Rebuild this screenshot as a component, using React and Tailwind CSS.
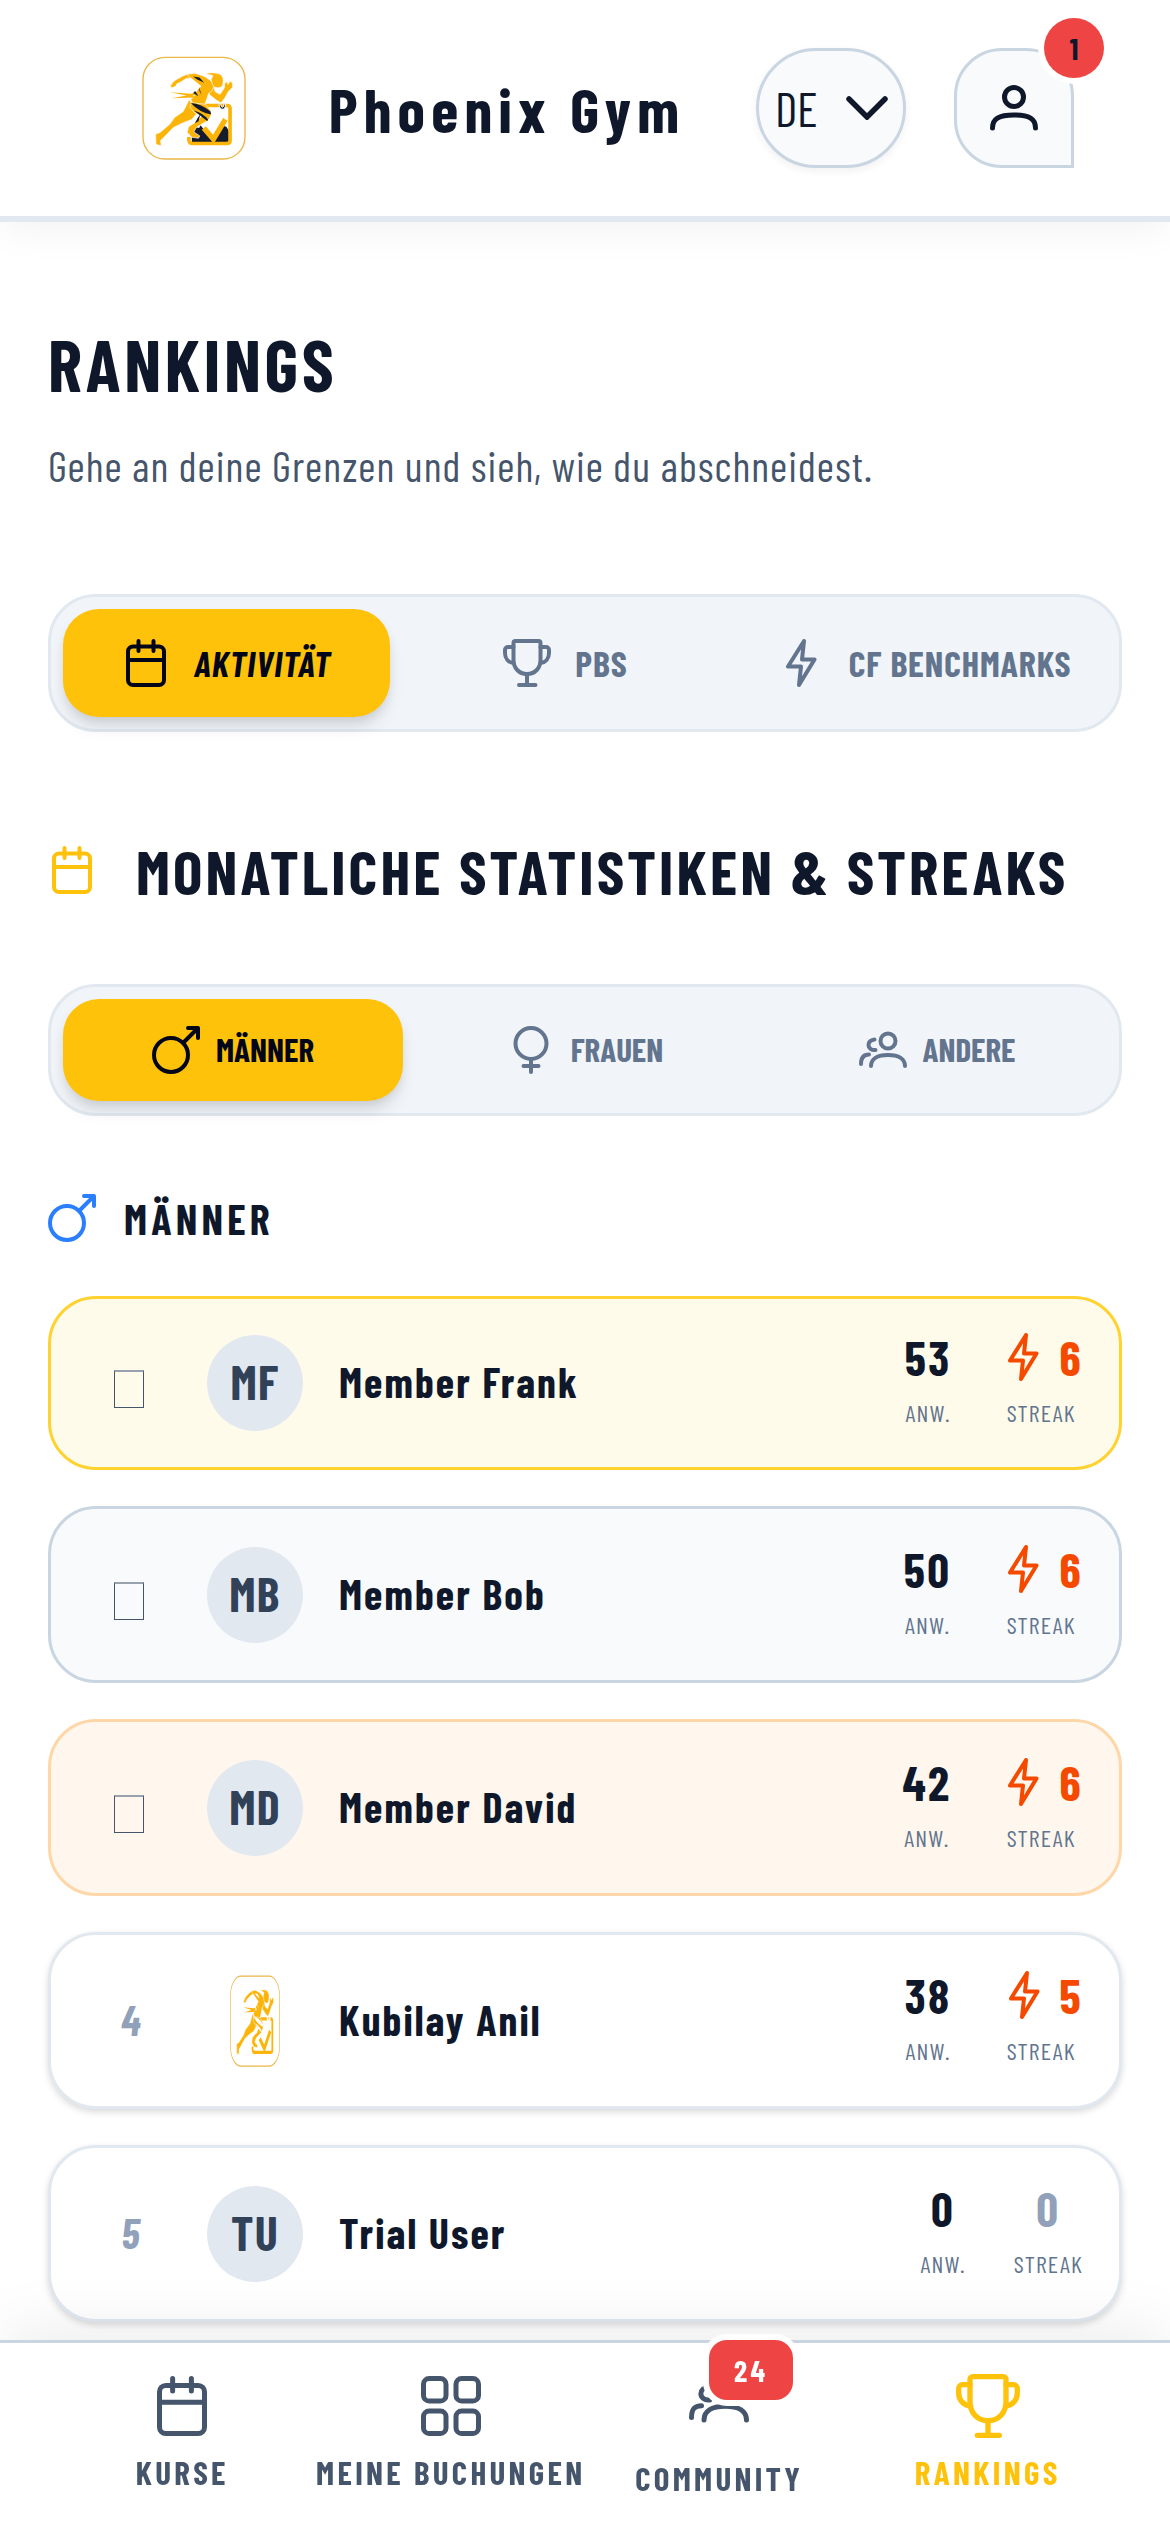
import React from "react";

function Icon({ className, size = "size-12", width = 4, children }) {
  return (
    <svg
      viewBox="0 0 48 48"
      className={`${size} shrink-0 ${className || ""}`}
      fill="none"
      stroke="currentColor"
      strokeWidth={width}
      strokeLinecap="round"
      strokeLinejoin="round"
      aria-hidden="true"
    >
      {children}
    </svg>
  );
}

const CalendarIcon = (p) => (
  <Icon {...p}>
    <rect x="6" y="7.5" width="36" height="38.5" rx="5" />
    <path d="M6.5 21h35M16.5 2v10M31.5 2v10" />
  </Icon>
);

const TrophyIcon = (p) => (
  <Icon {...p}>
    <path d="M12.5 2h23a2 2 0 0 1 2 2v17c0 8-5.5 14-13.5 14S10.5 29 10.5 21V4a2 2 0 0 1 2-2z" />
    <path d="M10.5 8H5a3 3 0 0 0-3 3v3c0 5.5 3.5 9.5 8.5 10M37.5 8H43a3 3 0 0 1 3 3v3c0 5.5-3.5 9.5-8.5 10M24 35v11M16 46h16.5" />
  </Icon>
);

const BoltIcon = (p) => (
  <Icon {...p}>
    <path d="M27 2 11 27.5h13L22 46l15.5-25.5H25z" />
  </Icon>
);

const MaleIcon = (p) => (
  <Icon {...p}>
    <circle cx="19" cy="29" r="17" />
    <path d="M31.5 16.5 45.5 2.5M36 2h10v10" />
  </Icon>
);

const FemaleIcon = (p) => (
  <Icon {...p}>
    <circle cx="24" cy="17.5" r="15.5" />
    <path d="M24 33v13M16.5 40h15" />
  </Icon>
);

const PeopleIcon = (p) => (
  <Icon {...p}>
    <circle cx="29" cy="15" r="7.5" />
    <path d="M12 40c0-7 6-11 17-11s17 4 17 11M15.5 13.5c-3.5.5-6 2.5-6 5.5s3 5.500 7 5M2 38c0-6.5 2.5-9.5 8-9.5" />
  </Icon>
);

const UserIcon = (p) => (
  <Icon {...p}>
    <circle cx="24" cy="13" r="9.5" />
    <path d="M2.5 44c0-9 6-13 21.500-13s21.500 4 21.500 13" />
  </Icon>
);

const GridIcon = (p) => (
  <Icon {...p}>
    <rect x="2" y="2" width="18" height="18" rx="4.5" />
    <rect x="28" y="2" width="18" height="18" rx="4.5" />
    <rect x="2" y="28" width="18" height="18" rx="4.5" />
    <rect x="28" y="28" width="18" height="18" rx="4.5" />
  </Icon>
);

function Runner({ className, light }) {
  const gold = "#fcb409";
  const dark = light ? "#ffffff" : "#141b2d";
  return (
    <svg
      viewBox="16 16 313 315"
      preserveAspectRatio="none"
      className={className}
      role="img"
      aria-label="Phoenix Gym"
    >
      <rect x="19" y="20" width="307" height="308" rx="66" fill="#fff" stroke="#eab646" strokeWidth="4" />
      <path d="M166 278V240l12-8 10 2 4-8 12 14 25 24 33-36 8 2 8 14v34z" fill={dark} />
      <path d="M205 166h67q9 0 9 9v97q0 9-9 9H168q-10 0-11-12v-8" fill="none" stroke={gold} strokeWidth="11" />
      <path d="m202 234 29 34 36-60" fill="none" stroke={gold} strokeWidth="16" />
      <g fill={gold} stroke="#fff" strokeWidth="2">
        <path d="M158 148 184 186 166 208 138 219 110 233 82 262 72 272 74 288 58 284 57 252 70 248 100 222 114 202 140 184Z" />
        <path d="M168 150 202 158 222 180Q229 194 214 212L196 222 180 232 172 246 190 258 186 265 166 262 152 248 156 230 178 216 196 198 172 186 160 170Z" />
        <path d="M160 68 140 76 118 88 108 96 101 108 106 112 118 108 120 101 130 96 150 84 174 82Z" />
        <path d="M222 98 232 104 236 124 251 132 264 112 265 98 272 94 275 102 281 92 289 98 288 112 277 122 266 142 254 158 240 150 218 132Z" />
        <path d="M150 72 175 68 205 78 222 90 234 104 228 120 216 130 212 144 205 162 168 158 163 148 175 135 184 116 194 108 172 90Z" />
        <path d="M206 68Q240 64 252 72C264 82 261 98 257 108Q250 114 243 112C236 112 231 108 228 102L224 88 229 76Z" />
        <path d="M99 126 165 130 198 117 190 130 168 136 176 142 104 144 150 136Z" strokeWidth="0" />
      </g>
      <g fill={dark}>
        <path d="m170 78 19 3 14 16-21-10zM188 110l7 24-6-12zM176 122l10 16-16-10zM163 158q32 2 59 26l2 9q-36-7-61-35zM172 181q32 10 43 28l-3 4q-24-19-40-32zM192 192l-6 22-11 6 9-17z" />
        <path d="M248 162q1 15 10 15t10-15l-5-1q0 10-5 10t-5-10z" stroke="#fff" strokeWidth="3" />
      </g>
    </svg>
  );
}

const mainTabs = [
  { label: "Aktivität", icon: CalendarIcon, active: true },
  { label: "PBs", icon: TrophyIcon },
  { label: "CF Benchmarks", icon: BoltIcon },
];

const genderTabs = [
  { label: "Männer", icon: MaleIcon, active: true },
  { label: "Frauen", icon: FemaleIcon },
  { label: "Andere", icon: PeopleIcon },
];

const members = [
  { rank: 1, name: "Member Frank", initials: "MF", visits: 53, streak: 6, style: "min-h-[174px] border-[#ffd230] bg-[#fffbeb]" },
  { rank: 2, name: "Member Bob", initials: "MB", visits: 50, streak: 6, style: "min-h-[177px] border-[#cad5e2] bg-[#f8fafc]" },
  { rank: 3, name: "Member David", initials: "MD", visits: 42, streak: 6, style: "min-h-[177px] border-[#ffd6a8] bg-[#fff7ed]" },
  { rank: 4, name: "Kubilay Anil", visits: 38, streak: 5, style: "min-h-[177px] border-[#e2e8f0] bg-white shadow-[0_3px_9px_rgba(0,0,0,0.08),0_3px_6px_rgba(0,0,0,0.08)]" },
  { rank: 5, name: "Trial User", initials: "TU", visits: 0, streak: 0, style: "min-h-[177px] border-[#e2e8f0] bg-white shadow-[0_3px_9px_rgba(0,0,0,0.08),0_3px_6px_rgba(0,0,0,0.08)]" },
];

function MemberRow({ m }) {
  return (
    <li className={`flex items-center rounded-[48px] border-3 px-9 ${m.style}`}>
      <div className="flex w-21 justify-center">
        {m.rank <= 3 ? (
          <span role="img" aria-label={`Platz ${m.rank}`} className="mt-3 h-[38px] w-[30px] border border-t-2 border-[#45556c] border-t-[#99a1af]" />
        ) : (
          <span className="pb-1 pl-1 text-[42px] leading-[60px] font-bold tracking-wide text-[#90a1b9] italic">{m.rank}</span>
        )}
      </div>
      <div className="ml-9 flex size-24 shrink-0 items-center justify-center">
        {m.initials ? (
          <span className="flex size-24 items-center justify-center rounded-full bg-[#e2e8f0] pb-1 text-[48px] leading-none font-bold tracking-wide text-[#314158]">
            {m.initials}
          </span>
        ) : (
          <Runner light className="h-[92px] w-[50px]" />
        )}
      </div>
      <p className="ml-9 min-w-0 flex-1 truncate pb-1 text-[42px] leading-[60px] font-bold tracking-wider">{m.name}</p>
      <dl className="flex gap-12 pt-1 text-center">
        <div className="flex flex-col-reverse">
          <dt className="text-[24px] leading-14 tracking-wider text-[#62748e]">ANW.</dt>
          <dd className="text-[48px] leading-14 font-bold tracking-wider">{m.visits}</dd>
        </div>
        <div className="flex flex-col-reverse">
          <dt className="text-[24px] leading-14 tracking-wider text-[#62748e]">STREAK</dt>
          {m.streak > 0 ? (
            <dd className="flex items-center justify-center gap-3 text-[48px] leading-14 font-bold tracking-wider text-[#f54900]">
              <BoltIcon />
              {m.streak}
            </dd>
          ) : (
            <dd className="text-[48px] leading-14 font-bold tracking-wider text-[#90a1b9]">{m.streak}</dd>
          )}
        </div>
      </dl>
    </li>
  );
}

const navItems = [
  { label: "Kurse", icon: CalendarIcon },
  { label: "Meine Buchungen", icon: GridIcon },
  { label: "Community", icon: PeopleIcon, badge: 24 },
  { label: "Rankings", icon: TrophyIcon, active: true },
];

export default function App() {
  return (
    <div className="min-h-screen bg-white pb-48 font-['Barlow_Condensed','Roboto_Condensed',sans-serif] text-[#0f172b]">
      <header className="flex items-center border-b-6 border-[#e2e8f0] bg-white py-12 pr-24 pl-[142px] shadow-[0_12px_36px_-3px_rgba(0,0,0,0.05)]">
        <Runner className="size-[104px] shrink-0" />
        <p className="flex-1 pl-3 text-center text-[62px] leading-[72px] font-bold tracking-widest">Phoenix Gym</p>
        <div className="relative shrink-0">
          <select
            aria-label="Sprache"
            defaultValue="DE"
            className="block h-30 w-[150px] appearance-none rounded-[60px] border-3 border-[#cad5e2] bg-[#f8fafc] pl-4 text-[48px] leading-[60px] shadow-[0_3px_9px_rgba(0,0,0,0.06)]"
          >
            <option>DE</option>
            <option>EN</option>
          </select>
          <svg viewBox="0 0 42 24" className="pointer-events-none absolute top-12 right-[18px] h-6 w-[42px]" fill="none" stroke="currentColor" strokeWidth="5.5" strokeLinecap="round" aria-hidden="true">
            <path d="m3 3 18 18L39 3" />
          </svg>
        </div>
        <button type="button" aria-label="Profil, 1 Benachrichtigung" className="relative ml-12 flex size-30 shrink-0 items-center justify-center rounded-[48px] rounded-br-none border-3 border-[#cad5e2] bg-[#f8fafc]">
          <UserIcon width={5} />
          <span className="absolute -top-[33px] -right-[33px] flex size-15 items-center justify-center rounded-full bg-[#ef4444] text-[30px] leading-none font-bold ring-6 ring-white">
            1
          </span>
        </button>
      </header>

      <main className="px-12 pt-24">
        <h1 className="text-[72px] leading-[90px] font-bold tracking-wider">RANKINGS</h1>
        <p className="mt-6 text-[42px] leading-[66px] tracking-wide text-[#45556c]">
          Gehe an deine Grenzen und sieh, wie du abschneidest.
        </p>

        <div role="tablist" className="mt-24 grid grid-cols-[327fr_327fr_366fr] gap-3 rounded-[48px] border-3 border-[#e2e8f0] bg-[#f1f5f9] p-3">
          {mainTabs.map(({ label, icon: TabIcon, active }) => (
            <button
              key={label}
              type="button"
              role="tab"
              aria-selected={!!active}
              className={`flex h-27 items-center justify-center gap-6 rounded-[36px] text-[36px] font-bold tracking-wide whitespace-nowrap uppercase ${active ? "bg-[#ffc20a] text-[#020618] italic shadow-[0_12px_18px_-3px_rgba(0,0,0,0.1),0_6px_12px_-3px_rgba(0,0,0,0.1)]" : "text-[#62748e]"}`}
            >
              <TabIcon />
              {label}
            </button>
          ))}
        </div>

        <h2 className="mt-24 flex items-center gap-10 text-[62px] leading-[84px] font-bold tracking-wider">
          <CalendarIcon className="text-[#ffc20a]" />
          MONATLICHE STATISTIKEN &amp; STREAKS
        </h2>

        <div role="tablist" className="mt-18 grid grid-cols-3 gap-3 rounded-[48px] border-3 border-[#e2e8f0] bg-[#f1f5f9] p-3">
          {genderTabs.map(({ label, icon: TabIcon, active }) => (
            <button
              key={label}
              type="button"
              role="tab"
              aria-selected={!!active}
              className={`flex h-[102px] items-center justify-center gap-4 rounded-[36px] text-[33px] font-bold uppercase ${active ? "bg-[#ffc20a] text-[#020618] shadow-[0_12px_18px_-3px_rgba(0,0,0,0.1),0_6px_12px_-3px_rgba(0,0,0,0.1)]" : "text-[#62748e]"}`}
            >
              <TabIcon />
              {label}
            </button>
          ))}
        </div>

        <h3 className="mt-18 flex items-center gap-7 text-[42px] leading-[60px] font-bold tracking-widest">
          <MaleIcon className="text-[#2b7fff]" />
          MÄNNER
        </h3>

        <ol className="mt-12 flex flex-col gap-9">
          {members.map((m) => (
            <MemberRow key={m.rank} m={m} />
          ))}
        </ol>
      </main>

      <nav className="fixed inset-x-0 bottom-0 grid grid-cols-4 items-center border-t-3 border-[#cad5e2] bg-white px-12 pt-[33px] pb-9 shadow-[0_-12px_60px_-3px_rgba(0,0,0,0.08)]">
        {navItems.map(({ label, icon: NavIcon, badge, active }) => (
          <a
            key={label}
            href="#"
            aria-current={active ? "page" : undefined}
            className={`flex flex-col items-center text-[33px] leading-12 font-bold tracking-widest whitespace-nowrap uppercase ${badge ? "-my-[6px] gap-6" : "gap-3"} ${active ? "text-[#ffc20a]" : "text-[#45556c]"}`}
          >
            <span className="relative">
              <NavIcon size={active ? "size-16" : "size-15"} className={active ? "-mx-[2px] -my-[2px]" : ""} />
              {badge && (
                <span className="absolute -top-[30px] left-5 flex h-15 w-21 items-center justify-center rounded-[18px] bg-[#ef4444] text-[30px] leading-none text-white ring-6 ring-white">
                  {badge}
                </span>
              )}
            </span>
            {label}
          </a>
        ))}
      </nav>
    </div>
  );
}
